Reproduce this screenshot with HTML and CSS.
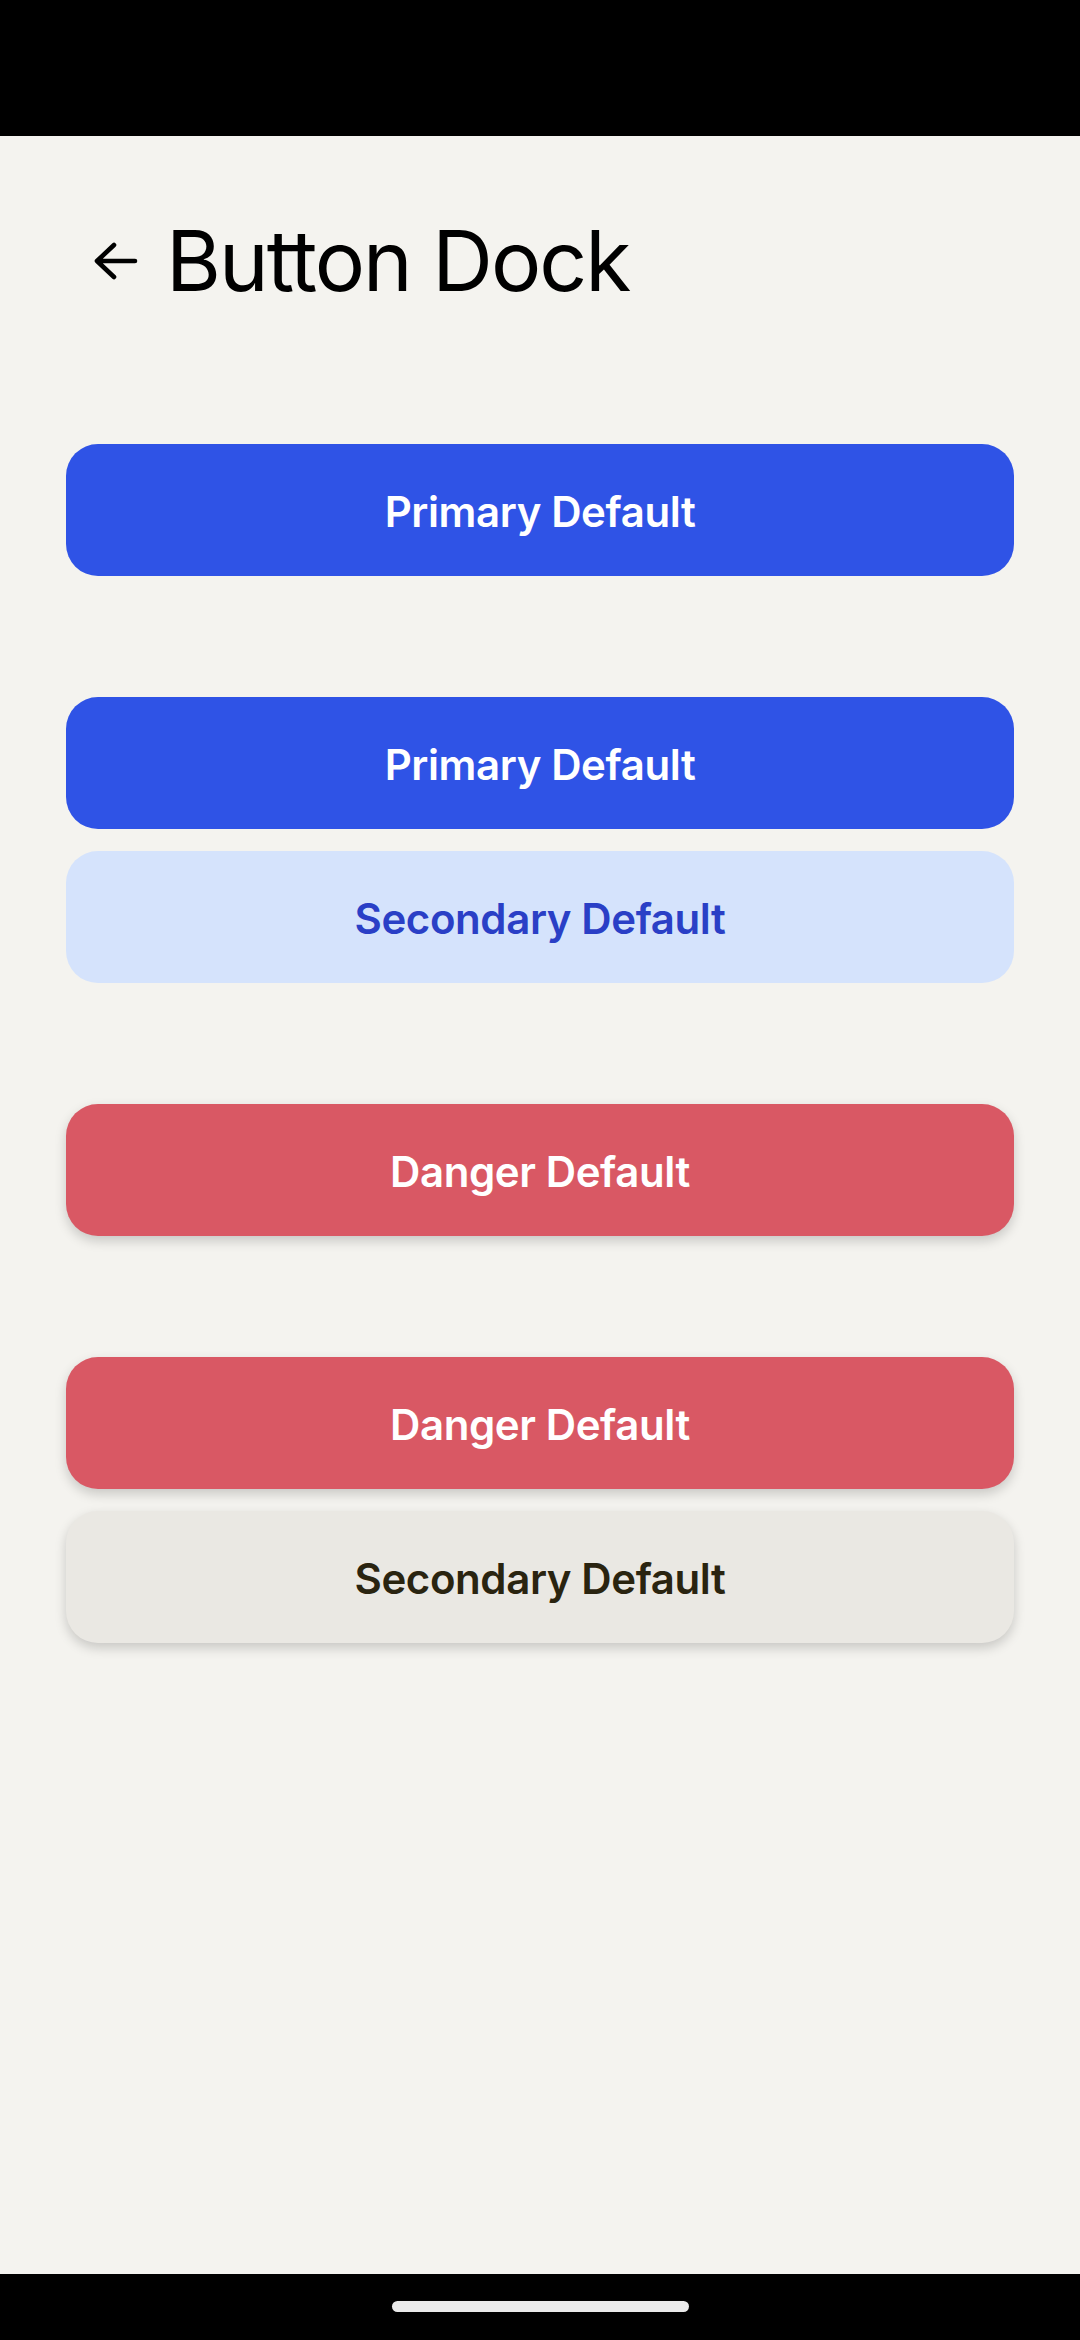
FILE: index.html
```html
<!DOCTYPE html>
<html lang="en">
<head>
<meta charset="utf-8">
<title>Button Dock</title>
<link rel="stylesheet" href="styles.css">
</head>
<body>
<div class="screen">
  <div class="status-bar"></div>
  <main class="content">
    <header class="header">
      <svg class="back" width="44" height="40" viewBox="0 0 44 40" aria-hidden="true">
        <path d="M3 20 H41 M3 20 L20 4 M3 20 L20 36" fill="none" stroke="#000" stroke-width="4.6" stroke-linecap="round" stroke-linejoin="round"/>
      </svg>
      <h1 class="title">Button Dock</h1>
    </header>
    <section class="group">
      <button class="btn btn-primary">Primary Default</button>
    </section>
    <section class="group">
      <button class="btn btn-primary">Primary Default</button>
      <button class="btn btn-secondary">Secondary Default</button>
    </section>
    <section class="group">
      <button class="btn btn-danger">Danger Default</button>
    </section>
    <section class="group">
      <button class="btn btn-danger">Danger Default</button>
      <button class="btn btn-neutral">Secondary Default</button>
    </section>
  </main>
  <div class="nav-bar"><div class="home-indicator"></div></div>
</div>
</body>
</html>
```
FILE: styles.css
```css
* { box-sizing: border-box; }
html, body { margin: 0; padding: 0; }
body {
  background: #f4f3ef;
  font-family: "Inter", "Liberation Sans", sans-serif;
}
.screen {
  width: 1080px;
  height: 2340px;
  display: flex;
  flex-direction: column;
}
.status-bar {
  height: 136px;
  background: #000;
  flex: none;
}
.content {
  flex: 1;
  display: flex;
  flex-direction: column;
  padding: 0 66px;
}
.header {
  display: flex;
  align-items: center;
  height: 252px;
  padding-left: 28px;
  padding-bottom: 2px;
}
.back {
  flex: none;
  margin-right: 28px;
}
.title {
  margin: 0;
  font-weight: 400;
  font-size: 84px;
  line-height: 1;
  color: #000;
  letter-spacing: -2px;
}
.group {
  display: flex;
  flex-direction: column;
  gap: 22px;
  margin-top: 56px;
}
.group + .group { margin-top: 121px; }
.btn {
  display: flex;
  align-items: center;
  justify-content: center;
  width: 100%;
  height: 132px;
  border: none;
  border-radius: 32px;
  font-family: "Inter", "Liberation Sans", sans-serif;
  font-size: 42px;
  font-weight: 600;
  letter-spacing: -0.4px;
  padding: 3px 0 0;
}
.btn-primary { background: #2f53e6; color: #fff; }
.btn-secondary { background: #d5e3fc; color: #2a3fc6; }
.btn-danger {
  background: #d95864;
  color: #fff;
  box-shadow: 0 5px 12px rgba(0, 0, 0, 0.18);
}
.btn-neutral {
  background: #eae8e3;
  color: #2a2410;
  box-shadow: 0 5px 12px rgba(0, 0, 0, 0.18);
}
.nav-bar {
  height: 66px;
  background: #000;
  flex: none;
  display: flex;
  justify-content: center;
  padding-top: 27px;
}
.home-indicator {
  width: 297px;
  height: 11px;
  border-radius: 6px;
  background: #eaeaea;
}
```
